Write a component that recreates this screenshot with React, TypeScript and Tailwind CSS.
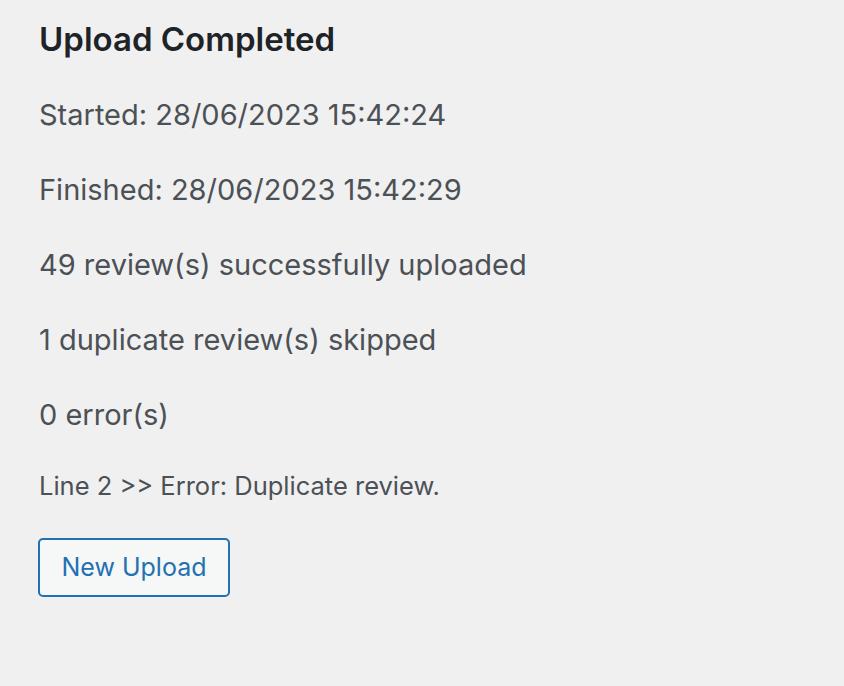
export default function App() {
  const lines = [
    "Started: 28/06/2023 15:42:24",
    "Finished: 28/06/2023 15:42:29",
    "49 review(s) successfully uploaded",
    "1 duplicate review(s) skipped",
    "0 error(s)",
  ];
  return (
    <div
      className="min-h-[686px] w-full bg-[#f0f0f1] px-[39px] pt-[18px] text-[#4c5156]"
      style={{ fontFamily: "Inter, 'Noto Sans', sans-serif" }}
    >
      <h2 className="text-[33px] font-semibold leading-[42px] text-[#1d2327]">Upload Completed</h2>
      <div className="mt-[37px] flex flex-col gap-[39px]">
        {lines.map((l) => (
          <p key={l} className="text-[29px] leading-[36px]">
            {l}
          </p>
        ))}
      </div>
      <p className="mt-[38px] text-[25.5px] leading-[30px]">Line 2 &gt;&gt; Error: Duplicate review.</p>
      <div className="-ml-px mt-[37px] flex">
        <button className="flex h-[59px] w-[192px] items-center justify-center rounded-[5px] border-2 border-[#2271b1] bg-[#f6f7f7] text-[25px] text-[#2271b1]">
          New Upload
        </button>
      </div>
    </div>
  );
}
